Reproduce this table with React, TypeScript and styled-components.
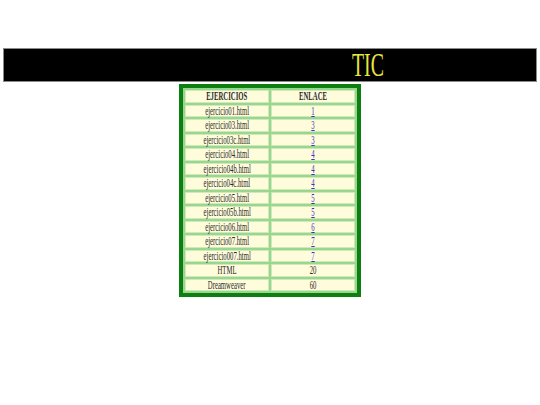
import React from "react";
import styled, { createGlobalStyle } from "styled-components";

const Global = createGlobalStyle`
  html, body { margin: 0; padding: 0; background: #ffffff; }
  body { font-family: "Liberation Serif", "Times New Roman", serif; }
`;

const Page = styled.div`
  width: 540px;
  height: 405px;
  padding-top: 48px;
  box-sizing: border-box;
  display: flex;
  flex-direction: column;
  align-items: center;
`;

const Banner = styled.header`
  width: 534px;
  height: 34px;
  box-sizing: border-box;
  background: #000000;
  border: 1px solid #8a8a8a;
  display: flex;
  align-items: center;
  padding-left: 348px;
`;

const Title = styled.h1`
  margin: 0;
  font-family: "Liberation Serif", serif;
  font-weight: normal;
  font-size: 33px;
  line-height: 1;
  color: #e8e83a;
  display: inline-block;
  transform: scaleX(0.6);
  transform-origin: left center;
`;

const Table = styled.div`
  margin-top: 2px;
  width: 182px;
  box-sizing: border-box;
  border: 4px solid #0c7f10;
  background: #9ad68c;
  padding: 2px;
  display: grid;
  grid-template-columns: 84px 84px;
  grid-auto-rows: 12.5px;
  gap: 2px;
`;

const Cell = styled.div`
  background: #fffcdc;
  box-shadow: inset 0 0 0 1px #cdeabd;
  display: flex;
  align-items: center;
  justify-content: center;
  overflow: visible;
  white-space: nowrap;
`;

const Text = styled.span<{ $bold?: boolean }>`
  display: inline-block;
  font-size: 12px;
  line-height: 1;
  color: #2a2a2a;
  font-weight: ${(p) => (p.$bold ? "bold" : "normal")};
  transform: scaleX(0.56);
  transform-origin: center;
`;

const Link = styled.a`
  display: inline-block;
  font-size: 12px;
  line-height: 1;
  color: #3535c0;
  text-decoration: underline;
  transform: scaleX(0.56);
`;

const rows: [string, string, boolean][] = [
  ["ejercicio01.html", "1", true],
  ["ejercicio03.html", "3", true],
  ["ejercicio03c.html", "3", true],
  ["ejercicio04.html", "4", true],
  ["ejercicio04b.html", "4", true],
  ["ejercicio04c.html", "4", true],
  ["ejercicio05.html", "5", true],
  ["ejercicio05b.html", "5", true],
  ["ejercicio06.html", "6", true],
  ["ejercicio07.html", "7", true],
  ["ejercicio007.html", "7", true],
  ["HTML", "20", false],
  ["Dreamweaver", "60", false],
];

export default function App() {
  return (
    <>
      <Global />
      <Page>
        <Banner>
          <Title>TIC</Title>
        </Banner>
        <Table>
          <Cell>
            <Text $bold>EJERCICIOS</Text>
          </Cell>
          <Cell>
            <Text $bold>ENLACE</Text>
          </Cell>
          {rows.map(([name, val, link]) => (
            <React.Fragment key={name}>
              <Cell>
                <Text>{name}</Text>
              </Cell>
              <Cell>
                {link ? <Link href="#">{val}</Link> : <Text>{val}</Text>}
              </Cell>
            </React.Fragment>
          ))}
        </Table>
      </Page>
    </>
  );
}
